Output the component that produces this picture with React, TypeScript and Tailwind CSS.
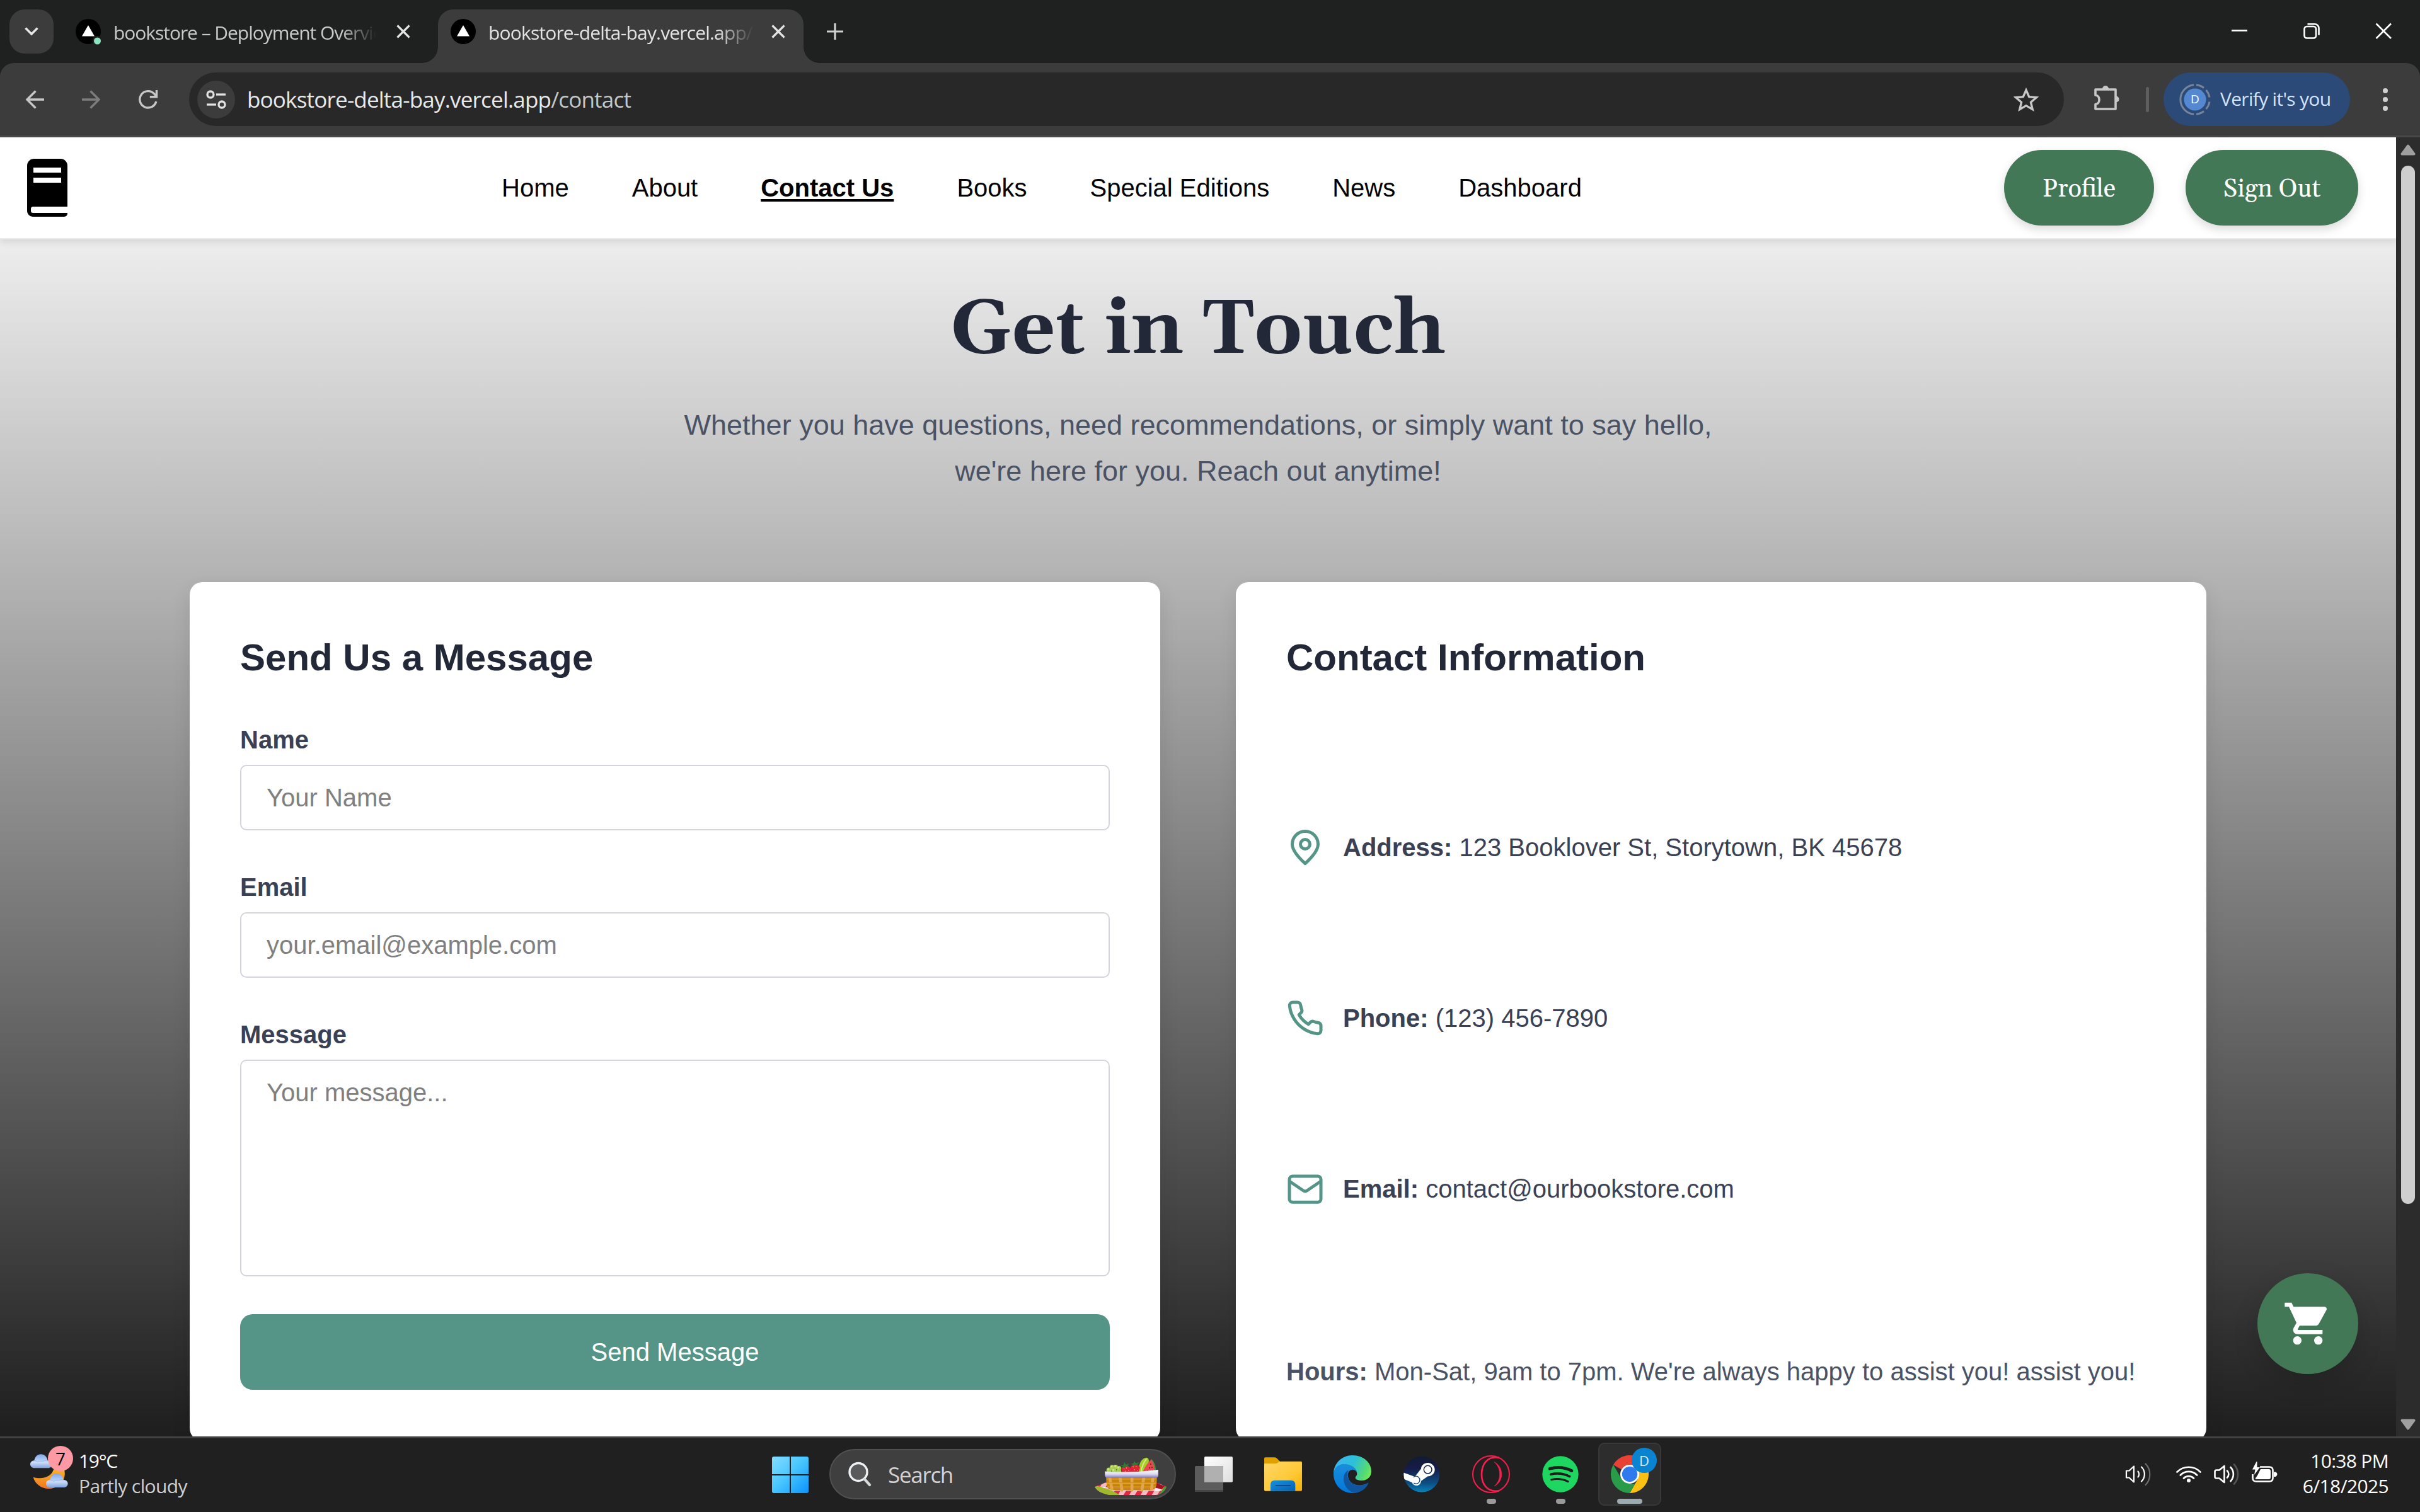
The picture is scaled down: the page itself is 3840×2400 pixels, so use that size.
import React from "react";
import { MdShoppingCart } from "react-icons/md";

const UI = "font-['Segoe_UI','Open_Sans','Noto_Sans',sans-serif]";
const SERIF = "font-[Georgia,Gelasio,'Liberation_Serif',serif]";

/* ---------- browser chrome ---------- */

function VercelFavicon({ dot = false }: { dot?: boolean }) {
  return (
    <svg viewBox="0 0 44 44" className="h-[44px] w-[44px] shrink-0">
      <circle cx="20" cy="22" r="20" fill="#000" />
      <path d="M20 12 30 29.500H10Z" fill="#fff" />
      {dot && <circle cx="34.500" cy="37" r="8" fill="#1f2120" />}
      {dot && <circle cx="34.500" cy="37" r="5.500" fill="#8ce3c0" />}
    </svg>
  );
}

function CloseIcon() {
  return (
    <svg viewBox="0 0 22 22" className="h-[22px] w-[22px] shrink-0" stroke="#e3e3e3" strokeWidth="3.200" fill="none">
      <path d="M1.500 1.500 20.500 20.500M20.500 1.500 1.500 20.500" />
    </svg>
  );
}

function TabStrip() {
  return (
    <div className="flex h-[100px] bg-[#1f2120] pt-[15px]">
      <div className="ml-[15px] flex h-[70px] w-[70px] items-center justify-center rounded-[24px] bg-[#3c3c3c]">
        <svg viewBox="0 0 22 14" className="h-[14px] w-[22px]" fill="none" stroke="#e8e8e8" strokeWidth="3.400">
          <path d="M1.500 1.500 11 11 20.500 1.500" />
        </svg>
      </div>

      <div className="ml-[35px] flex h-[70px] w-[575px] items-center">
        <VercelFavicon dot />
        <span className="mt-[3px] ml-[16px] w-[421px] overflow-hidden text-[30px] leading-[44px] tracking-[-1.050px] whitespace-nowrap text-[#c9c9c9] [mask-image:linear-gradient(to_right,black_86%,transparent_99%)]">
          bookstore – Deployment Overview
        </span>
        <span className="ml-[28px] flex">
          <CloseIcon />
        </span>
      </div>

      <div className="relative flex h-[85px] w-[580px] rounded-t-[24px] bg-[#3c3c3c] pb-[15px] pl-[20px]">
        <span className="absolute bottom-0 -left-[25px] h-[25px] w-[25px] bg-[radial-gradient(circle_at_0_0,transparent_24.500px,#3c3c3c_25px)]" />
        <span className="absolute -right-[25px] bottom-0 h-[25px] w-[25px] bg-[radial-gradient(circle_at_100%_0,transparent_24.500px,#3c3c3c_25px)]" />
        <div className="flex h-[70px] items-center">
          <VercelFavicon />
          <span className="mt-[3px] ml-[16px] w-[421px] overflow-hidden text-[30px] leading-[44px] tracking-[-0.830px] whitespace-nowrap text-[#e3e3e3] [mask-image:linear-gradient(to_right,black_86%,transparent_100%)]">
            bookstore-delta-bay.vercel.app/contact
          </span>
          <span className="ml-[28px] flex">
            <CloseIcon />
          </span>
        </div>
      </div>

      <div className="ml-[37px] flex h-[70px] items-center">
        <svg viewBox="0 0 26 26" className="h-[26px] w-[26px]" stroke="#d0d0d0" strokeWidth="3.200">
          <path d="M13 0V26M0 13H26" />
        </svg>
      </div>

      <svg viewBox="0 0 256 28" className="mt-[20px] mr-[44px] ml-auto h-[28px] w-[256px]" fill="none" stroke="#fff" strokeWidth="2.600">
        <path d="M1 13.500H26" />
        <rect x="116.500" y="7" width="18.500" height="18.500" rx="4" />
        <path d="M121.500 3.200h11.500a6.500 6.500 0 0 1 6.500 6.500v11" />
        <path d="M230.500 2.500 254 26M254 2.500 230.500 26" />
      </svg>
    </div>
  );
}

function Toolbar() {
  return (
    <div className="bg-[#1f2120]">
      <div className="flex h-[118px] items-center rounded-t-[22px] border-b-[3px] border-[#484848] bg-[#3c3c3c]">
        <svg viewBox="0 0 30 30" className="ml-[40px] h-[30px] w-[30px]" fill="none" stroke="#c7c7c7" strokeWidth="3.400">
          <path d="M30 15H3M16.500 1.500 3 15 16.500 28.500" />
        </svg>
        <svg viewBox="0 0 30 30" className="ml-[60px] h-[30px] w-[30px]" fill="none" stroke="#7d7d7d" strokeWidth="3.400">
          <path d="M0 15H27M13.500 1.500 27 15 13.500 28.500" />
        </svg>
        <svg viewBox="0 0 32 32" className="ml-[59px] h-[32px] w-[32px]" fill="none" stroke="#c7c7c7" strokeWidth="3.400">
          <path d="M28.800 19A13.200 13.200 0 1 1 26 7.200L29 10.500" />
          <path d="M29.500 1V11.800H18.800" />
        </svg>

        <div className="ml-[49px] flex h-[85px] w-[2975px] items-center rounded-full bg-[#282828] pl-[13px]">
          <div className="flex h-[60px] w-[60px] items-center justify-center rounded-full bg-[#3c3c3c]">
            <svg viewBox="0 0 32 30" className="h-[30px] w-[32px]" fill="none" stroke="#e3e3e3" strokeWidth="3.300">
              <circle cx="7" cy="7" r="5" />
              <path d="M16 7H31" />
              <circle cx="25" cy="23" r="5" />
              <path d="M1 23H16" />
            </svg>
          </div>
          <span className="ml-[19px] text-[35px] leading-[48px] tracking-[-0.800px] text-[#e8e8e8]">
            bookstore-delta-bay.vercel.app<span className="text-[#c4c7c5]">/contact</span>
          </span>
          <svg viewBox="0 0 40 38" className="mr-[40px] ml-auto h-[38px] w-[40px]" fill="none" stroke="#c7c7c7" strokeWidth="3.400">
            <path d="M20 4 24.700 14.600 36.300 15.700 27.500 23.300 30.200 34.600 20 28.600 9.800 34.600 12.500 23.300 3.700 15.700 15.300 14.600Z" />
          </svg>
        </div>

        <svg viewBox="0 0 42 42" className="mb-[5px] ml-[47px] h-[42px] w-[42px]" fill="none" stroke="#c7c7c7" strokeWidth="3.600" strokeLinejoin="round">
          <path d="M3 8H35V39H3V31.500C11 31 11 17.500 3 17Z" />
          <path d="M14 7a5 5 0 0 1 10 0ZM35.500 18.500a5 5 0 0 1 0 10Z" fill="#c7c7c7" stroke="none" />
        </svg>
        <div className="ml-[41px] h-[40px] w-[5px] rounded-full bg-[#5e5e5e]" />

        <div className="ml-[23px] flex h-[85px] w-[296px] items-center rounded-full bg-[#2b4a77] pl-[25px]">
          <span className="relative flex h-[50px] w-[50px] items-center justify-center">
            <svg viewBox="0 0 50 50" className="absolute inset-0 h-[50px] w-[50px]" fill="none">
              <circle cx="25" cy="25" r="17.500" fill="#5489d2" />
              <path d="M23 1.800A23.300 23.300 0 0 0 23 48.200" stroke="#77859a" strokeWidth="3" />
              <path d="M27 1.800A23.300 23.300 0 0 1 39 6.500M42.500 10A23.300 23.300 0 0 1 48 21.500M48 28.500A23.300 23.300 0 0 1 42.500 40M39 43.500A23.300 23.300 0 0 1 27 48.200" stroke="#77859a" strokeWidth="3" />
            </svg>
            <span className="relative text-[19px] leading-none text-white">D</span>
          </span>
          <span className="mb-[1px] ml-[15px] text-[30px] leading-[44px] tracking-[-0.700px] whitespace-nowrap text-[#d3e3fd]">Verify it's you</span>
        </div>

        <svg viewBox="0 0 8 38" className="ml-[52px] h-[38px] w-[8px]" fill="#d0d0d0">
          <circle cx="4" cy="5" r="4" />
          <circle cx="4" cy="19" r="4" />
          <circle cx="4" cy="33" r="4" />
        </svg>
      </div>
    </div>
  );
}

/* ---------- web page ---------- */

const links = ["Home", "About", "Contact Us", "Books", "Special Editions", "News", "Dashboard"];

function SiteNav() {
  return (
    <header className="relative flex h-[162px] shrink-0 items-center border-b-2 border-[#ebebeb] bg-white shadow-[0_3px_12px_rgba(0,0,0,0.13)]">
      <svg viewBox="0 0 64 92" className="ml-[43px] h-[92px] w-[64px]">
        <path d="M11 0H53A11 11 0 0 1 64 11V76H9.500Q6 76 6 79.500V82.500Q6 86 9.500 86H64V87A5 5 0 0 1 59 92H9A9 9 0 0 1 0 83V11A11 11 0 0 1 11 0Z" />
        <path d="M10 14H54V22H10ZM10 30H54V38H10Z" fill="#fff" />
      </svg>
      <nav className="ml-[689px] flex gap-[100px] text-[40px] leading-[60px] whitespace-nowrap text-black">
        {links.map((l) =>
          l === "Contact Us" ? (
            <a key={l} className="font-bold underline decoration-[4px] underline-offset-[4px]">{l}</a>
          ) : (
            <a key={l}>{l}</a>
          ),
        )}
      </nav>
      <div className={`mr-[60px] ml-auto flex gap-[50px] text-[40px] leading-[60px] text-white ${SERIF}`}>
        <button className="h-[120px] w-[238px] rounded-full bg-[#427855] pt-[5px] shadow-[0_6px_15px_rgba(0,0,0,0.15)]">Profile</button>
        <button className="h-[120px] w-[274px] rounded-full bg-[#427855] pt-[5px] shadow-[0_6px_15px_rgba(0,0,0,0.15)]">Sign Out</button>
      </div>
    </header>
  );
}

function Field({ label, placeholder, tall = false }: { label: string; placeholder: string; tall?: boolean }) {
  return (
    <label className="mb-[60px] block">
      <span className="mb-[10px] block text-[40px] leading-[60px] font-bold text-[#3a4155]">{label}</span>
      {tall ? (
        <textarea
          placeholder={placeholder}
          className="block h-[344px] w-full resize-none rounded-[10px] border-[2px] border-[#d3d5dd] bg-white px-[40px] py-[20px] text-[40px] leading-[60px] placeholder:text-[#808080]"
        />
      ) : (
        <input
          placeholder={placeholder}
          className="block h-[104px] w-full rounded-[10px] border-[2px] border-[#d3d5dd] bg-white px-[40px] text-[40px] leading-[60px] placeholder:text-[#808080]"
        />
      )}
    </label>
  );
}

function FeatherIcon({ children }: { children: React.ReactNode }) {
  return (
    <svg viewBox="0 0 24 24" className="h-[60px] w-[60px] shrink-0" fill="none" stroke="#559588" strokeWidth="2" strokeLinecap="round" strokeLinejoin="round">
      {children}
    </svg>
  );
}

const contacts = [
  {
    label: "Address:",
    value: "123 Booklover St, Storytown, BK 45678",
    icon: (
      <>
        <path d="M12 22.300C9.500 20 3.800 14.500 3.800 10a8.200 8.200 0 0 1 16.400 0C20.200 14.500 14.500 20 12 22.300Z" />
        <circle cx="12" cy="10" r="3" />
      </>
    ),
  },
  {
    label: "Phone:",
    value: "(123) 456-7890",
    icon: (
      <path d="M22 16.920v3a2 2 0 0 1-2.180 2 19.790 19.790 0 0 1-8.630-3.070 19.500 19.500 0 0 1-6-6 19.790 19.790 0 0 1-3.070-8.670A2 2 0 0 1 4.110 2h3a2 2 0 0 1 2 1.720 12.840 12.840 0 0 0 .7 2.810 2 2 0 0 1-.45 2.110L8.090 9.910a16 16 0 0 0 6 6l1.270-1.270a2 2 0 0 1 2.110-.45 12.840 12.840 0 0 0 2.810.7A2 2 0 0 1 22 16.920z" />
    ),
  },
  {
    label: "Email:",
    value: "contact@ourbookstore.com",
    icon: (
      <>
        <rect x="2" y="4" width="20" height="16.500" rx="2" />
        <path d="M2.200 7.300 10.900 13.200a2 2 0 0 0 2.200 0L21.800 7.300" />
      </>
    ),
  },
];

function ContactPage() {
  return (
    <div className="relative flex h-[2062px] w-[3802px] flex-col overflow-hidden bg-[linear-gradient(to_bottom,#ffffff_0px,#000000_2338px)] font-['Liberation_Sans',Arial,sans-serif]">
      <SiteNav />
      <main className="flex shrink-0 flex-col items-center">
        <h1 className={`mt-[70px] text-[120px] leading-[150px] font-bold text-[#232838] ${SERIF}`}>Get in Touch</h1>
        <p className="mt-[38px] text-center text-[45px] leading-[73px] text-[#4a5365]">
          Whether you have questions, need recommendations, or simply want to say hello,
          <br />
          we're here for you. Reach out anytime!
        </p>

        <div className="mt-[140px] flex gap-[120px]">
          <section className="h-[1363px] w-[1540px] rounded-[20px] bg-white p-[80px] shadow-[0_10px_30px_rgba(0,0,0,0.1)]">
            <h2 className="mb-[60px] text-[60px] leading-[80px] font-bold text-[#232838]">Send Us a Message</h2>
            <Field label="Name" placeholder="Your Name" />
            <Field label="Email" placeholder="your.email@example.com" />
            <Field label="Message" placeholder="Your message..." tall />
            <button className="block h-[120px] w-full rounded-[20px] bg-[#559588] text-[40px] leading-[60px] text-white">Send Message</button>
          </section>

          <section className="flex h-[1363px] w-[1540px] flex-col rounded-[20px] bg-white p-[80px] shadow-[0_10px_30px_rgba(0,0,0,0.1)]">
            <h2 className="text-[60px] leading-[80px] font-bold text-[#232838]">Contact Information</h2>
            <ul className="mt-[231px] flex flex-col gap-[211px]">
              {contacts.map((c) => (
                <li key={c.label} className="flex h-[60px] items-center text-[40px] leading-[60px] whitespace-nowrap text-[#3a4155]">
                  <FeatherIcon>{c.icon}</FeatherIcon>
                  <span className="ml-[30px]">
                    <strong>{c.label}</strong> {c.value}
                  </span>
                </li>
              ))}
            </ul>
            <p className="mt-auto text-[40px] leading-[60px] whitespace-nowrap text-[#4a5365]">
              <strong>Hours:</strong> Mon-Sat, 9am to 7pm. We're always happy to assist you! assist you!
            </p>
          </section>
        </div>
      </main>

      <button className="absolute right-[60px] bottom-[99px] flex h-[160px] w-[160px] items-center justify-center rounded-full bg-[#427855] text-white shadow-[0_15px_40px_rgba(0,0,0,0.15)]">
        <MdShoppingCart className="h-[80px] w-[80px]" />
      </button>
    </div>
  );
}

function Scrollbar() {
  return (
    <div className="flex w-[38px] flex-col items-center bg-[#2c2c2c]">
      <svg viewBox="0 0 24 18" className="mt-[11px] h-[18px] w-[24px]">
        <path d="M12 2.500 21.500 15.500H2.500Z" fill="#9f9f9f" stroke="#9f9f9f" strokeWidth="4" strokeLinejoin="round" />
      </svg>
      <div className="mt-[16px] h-[1648px] w-[22px] rounded-full bg-[#cfcfcf]" />
      <svg viewBox="0 0 24 18" className="mt-auto mb-[10px] h-[18px] w-[24px]">
        <path d="M12 15.500 21.500 2.500H2.500Z" fill="#9f9f9f" stroke="#9f9f9f" strokeWidth="4" strokeLinejoin="round" />
      </svg>
    </div>
  );
}

/* ---------- taskbar ---------- */

function Cloud({ transform }: { transform: string }) {
  return (
    <g transform={transform}>
      <path d="M20 68C8 68 0 60 0 50S8 32 19 32C22 14 34 2 51 2S80 14 83 32C96 32 104 40 104 50S96 68 84 68Z" fill="url(#cloudFill)" />
      <path d="M19 32C28 32 33 35 36 40C42 34 52 32 60 36C66 30 76 29 83 32" fill="none" stroke="#84a9e8" strokeWidth="3" opacity=".55" />
    </g>
  );
}

function Weather() {
  return (
    <div className="flex h-full w-[1204px] items-center pl-[48px]">
      <span className="relative mb-[22px] h-[68px] w-[68px] shrink-0">
        <svg viewBox="144 105 204 204" className="h-[68px] w-[68px]">
          <defs>
            <linearGradient id="cloudFill" x1="0" y1="0" x2="0" y2="1">
              <stop offset="0" stopColor="#7ea8ec" />
              <stop offset=".6" stopColor="#c9dbf7" />
              <stop offset="1" stopColor="#7fa2e0" />
            </linearGradient>
            <linearGradient id="moonFill" x1="0" y1="0" x2="0" y2="1">
              <stop offset="0" stopColor="#f7c52f" />
              <stop offset="1" stopColor="#f2761e" />
            </linearGradient>
          </defs>
          <path d="M158 254C180 260 206 262 228 250C250 238 262 215 255 190L300 200C316 235 308 270 285 290C240 325 175 310 158 254Z" fill="url(#moonFill)" />
          <Cloud transform="translate(144 143)" />
          <Cloud transform="translate(219 235)" />
        </svg>
        <span className="absolute top-0 right-0 flex h-[40px] w-[40px] items-center justify-center rounded-full bg-[#ff99a4] text-[28px] leading-none text-black">7</span>
      </span>
      <span className="mb-[2px] ml-[9px] flex flex-col text-[30px] leading-[40px] whitespace-nowrap">
        <span className="tracking-[-1.300px] text-white">19°C</span>
        <span className="tracking-[-0.600px] text-[#cfcfcf]">Partly cloudy</span>
      </span>
    </div>
  );
}

function Tile({ children, dot = false }: { children: React.ReactNode; dot?: boolean }) {
  return (
    <div className="relative flex h-[100px] w-[100px] shrink-0 items-center justify-center">
      {children}
      {dot && <span className="absolute bottom-[3px] left-[43px] h-[8px] w-[15px] rounded-full bg-[#9a9a9a]" />}
    </div>
  );
}

function StartIcon() {
  return (
    <svg viewBox="0 0 58 58" className="mt-[2px] h-[58px] w-[58px]">
      <defs>
        <linearGradient id="startFill" gradientUnits="userSpaceOnUse" x1="0" y1="0" x2="58" y2="58">
          <stop offset="0" stopColor="#87dcff" />
          <stop offset=".45" stopColor="#4cc8ff" />
          <stop offset="1" stopColor="#0a93fb" />
        </linearGradient>
      </defs>
      <path d="M3 0H28V28H0V3A3 3 0 0 1 3 0ZM30 0H55A3 3 0 0 1 58 3V28H30ZM0 30H28V58H3A3 3 0 0 1 0 55ZM30 30H58V55A3 3 0 0 1 55 58H30Z" fill="url(#startFill)" />
    </svg>
  );
}

function PicnicBasket() {
  return (
    <svg viewBox="50 68 343 181" className="h-[60px] w-[114px]">
      <defs>
        <pattern id="gingham" width="54" height="40" patternUnits="userSpaceOnUse" patternTransform="translate(60 190) skewX(-30)">
          <rect width="54" height="40" fill="#f9b9c3" />
          <rect width="27" height="20" fill="#e5263f" />
          <rect x="27" y="20" width="27" height="20" fill="#fff1f2" />
        </pattern>
        <linearGradient id="rimFill" x1="0" y1="0" x2="0" y2="1">
          <stop offset="0" stopColor="#ffffff" />
          <stop offset=".55" stopColor="#dcd8ec" />
          <stop offset="1" stopColor="#7a74c4" />
        </linearGradient>
        <linearGradient id="basketFill" x1="0" y1="0" x2="0" y2="1">
          <stop offset="0" stopColor="#c9840f" />
          <stop offset=".5" stopColor="#e3a026" />
          <stop offset="1" stopColor="#c17d1e" />
        </linearGradient>
      </defs>
      <path d="M50 210 100 190H345L393 208C385 232 365 248 340 249H130C90 246 62 232 50 210Z" fill="url(#gingham)" />
      <path d="M50 210 64 205C90 215 140 225 168 249H125C90 246 62 232 50 210Z" fill="#9fb92e" />
      <path d="M393 210C385 232 370 244 350 248C365 238 376 222 383 206Z" fill="#4f9a2f" />
      <path d="M345 192 384 206 372 222 330 212Z" fill="#a3101f" />
      <path d="M104 160H348L345 200Q342 226 316 226H138Q110 226 107 200Z" fill="url(#basketFill)" />
      <path d="M106 182H346M108 202H345" stroke="#c58208" strokeWidth="9" />
      <path d="M122 168 132 220M172 168 180 226M228 168V226M284 168 276 226M328 168 322 220" stroke="#e0a748" strokeWidth="14" strokeLinecap="round" />
      <path d="M108 190H345" stroke="#a86a10" strokeWidth="2" opacity=".6" />
      <path d="M262 140C258 110 268 80 290 72C302 66 312 76 308 92L300 140Z" fill="#a6cf2c" />
      <path d="M272 138C275 112 284 92 298 76" stroke="#dcef8a" strokeWidth="5" fill="none" />
      <path d="M280 138C290 115 305 92 322 78C335 92 342 115 341 140Z" fill="#e84a4f" />
      <path d="M322 78C338 94 345 118 342 140H335C338 118 332 96 320 80Z" fill="#3d9140" />
      <path d="M318 98V104M312 116V122M324 114V120M304 130V136M326 130V136" stroke="#3a1014" strokeWidth="4" />
      <g fill="#a9cf52">
        <circle cx="118" cy="130" r="12" />
        <circle cx="134" cy="117" r="12" />
        <circle cx="150" cy="115" r="11" />
        <circle cx="166" cy="121" r="11" />
        <circle cx="142" cy="133" r="12" />
        <circle cx="165" cy="136" r="12" />
      </g>
      <g fill="#d3e88a">
        <circle cx="115" cy="126" r="4.500" />
        <circle cx="131" cy="113" r="4.500" />
        <circle cx="148" cy="111" r="4.500" />
        <circle cx="163" cy="118" r="4.500" />
        <circle cx="139" cy="130" r="4.500" />
      </g>
      <path d="M176 120C190 108 215 108 226 124L222 142H182ZM222 112C238 100 258 102 267 116L260 142H224Z" fill="#e5203a" />
      <path d="M190 122v4M202 118v4M212 128v4M196 133v4M234 112v4M248 112v4M240 126v4M254 128v4" stroke="#ffd54a" strokeWidth="4" />
      <path d="M172 108 188 106 192 92 200 104 214 96 208 108 216 114 198 114 184 122 186 112ZM222 100 234 98 240 86 246 97 264 92 254 102 258 108 242 106 230 112 232 104Z" fill="#2f7d32" />
      <path d="M98 136Q226 144 354 128V158Q352 167 342 167H112Q101 167 99 158Z" fill="url(#rimFill)" />
    </svg>
  );
}

function TaskViewIcon() {
  return (
    <svg viewBox="528 66 180 168" className="h-[56px] w-[60px]">
      <defs>
        <linearGradient id="tvFront" x1="0" y1="0" x2="1" y2="1">
          <stop offset="0" stopColor="#ffffff" />
          <stop offset="1" stopColor="#dedede" />
        </linearGradient>
      </defs>
      <rect x="573" y="66" width="135" height="122" rx="5" fill="url(#tvFront)" />
      <rect x="528" y="111" width="135" height="123" rx="5" fill="#5c5c5c" />
      <path d="M573 111H658Q663 111 663 116V188H573Z" fill="#b0b0b0" />
      <path d="M528 225H663V229Q663 234 658 234H533Q528 234 528 229Z" fill="#454545" />
    </svg>
  );
}

function FolderIcon() {
  return (
    <svg viewBox="858 62 180 180" className="h-[60px] w-[60px]">
      <defs>
        <linearGradient id="folderFill" x1="0" y1="0" x2="1" y2="1">
          <stop offset="0" stopColor="#ffd768" />
          <stop offset=".6" stopColor="#ffc937" />
          <stop offset="1" stopColor="#f5b000" />
        </linearGradient>
        <linearGradient id="folderTab" x1="0" y1="0" x2="1" y2="1">
          <stop offset="0" stopColor="#1592dd" />
          <stop offset="1" stopColor="#0560b5" />
        </linearGradient>
      </defs>
      <path d="M863 72H908Q914 72 919 77L934 92V110H858V77Q858 72 863 72Z" fill="#e0a100" />
      <path d="M858 106Q858 101 863 101H912Q918 101 922 98L929 93Q932 91 937 91H1033Q1038 91 1038 96V227Q1038 232 1033 232H863Q858 232 858 227Z" fill="url(#folderFill)" />
      <path d="M888 232V202Q888 181 909 181H985Q1006 181 1006 202V232Z" fill="url(#folderTab)" />
      <path d="M912 206H984" stroke="#0b3f83" strokeWidth="5" />
    </svg>
  );
}

function EdgeIcon() {
  return (
    <svg viewBox="1188 60 180 180" className="h-[60px] w-[60px]">
      <defs>
        <linearGradient id="edgeTop" x1="0" y1=".3" x2="1" y2=".6">
          <stop offset="0" stopColor="#3ab4f6" />
          <stop offset=".5" stopColor="#2dc1d6" />
          <stop offset=".85" stopColor="#53d977" />
          <stop offset="1" stopColor="#6ce85a" />
        </linearGradient>
        <linearGradient id="edgeMid" x1="0" y1="0" x2="0" y2="1">
          <stop offset="0" stopColor="#1a8fdc" />
          <stop offset="1" stopColor="#0078d8" />
        </linearGradient>
      </defs>
      <path d="M1188 150C1188 98 1228 60 1278 60C1332 60 1368 96 1368 136C1368 162 1350 180 1324 180C1304 180 1292 174 1292 167C1292 162 1300 158 1300 148C1300 118 1260 100 1228 104C1206 108 1190 126 1188 150Z" fill="url(#edgeTop)" />
      <path d="M1188 148C1190 120 1212 100 1244 102C1276 104 1300 124 1300 146C1298 134 1288 128 1276 128C1264 130 1256 142 1256 154C1258 190 1290 210 1330 200L1353 192C1340 220 1312 240 1278 240C1226 240 1188 200 1188 148Z" fill="url(#edgeMid)" />
      <path d="M1256 132C1240 142 1232 164 1238 188C1246 218 1268 236 1292 239C1322 234 1344 216 1354 194C1354 191 1352 191 1349 193C1300 222 1254 190 1254 152C1254 144 1256 138 1258 134Z" fill="#0f55a0" />
    </svg>
  );
}

function SteamIcon() {
  return (
    <svg viewBox="77 90 180 180" className="h-[60px] w-[60px]">
      <defs>
        <linearGradient id="steamFill" x1="0" y1="0" x2="0" y2="1">
          <stop offset="0" stopColor="#111b33" />
          <stop offset=".35" stopColor="#171c48" />
          <stop offset=".75" stopColor="#0b4f83" />
          <stop offset="1" stopColor="#0784bd" />
        </linearGradient>
        <clipPath id="steamClip">
          <circle cx="167" cy="180" r="86" />
        </clipPath>
      </defs>
      <g clipPath="url(#steamClip)">
        <circle cx="167" cy="180" r="86" fill="url(#steamFill)" />
        <path d="M78 172 134 192 164 154C164 138 178 126 196 126C214 126 229 141 229 158C229 176 214 190 196 190L164 212C162 226 154 234 142 234C132 234 124 228 120 219L78 202Z" fill="#fff" />
        <circle cx="196" cy="158" r="19" fill="none" stroke="#161d47" strokeWidth="4.500" />
        <path d="M128 194A18 18 0 1 1 129 222" fill="none" stroke="#10426f" strokeWidth="4" />
      </g>
    </svg>
  );
}

function OperaIcon() {
  return (
    <svg viewBox="408 90 180 180" className="h-[60px] w-[60px]" fill="none" stroke="#fa1e4e">
      <circle cx="498" cy="180" r="87" strokeWidth="6" />
      <path d="M536 101C478 92 453 135 453 180S478 268 536 259" strokeWidth="8" />
      <path d="M513 122C560 145 560 215 513 237C548 210 548 150 513 122Z" fill="#fa1e4e" strokeWidth="2" />
    </svg>
  );
}

function SpotifyIcon() {
  return (
    <svg viewBox="737 90 180 180" className="h-[60px] w-[60px]">
      <circle cx="827" cy="180" r="86" fill="#1ed760" />
      <g fill="none" stroke="#1d1d1d" strokeLinecap="round">
        <path d="M776 154C812 144 850 148 881 164" strokeWidth="14" />
        <path d="M781 181C812 173 843 177 871 191" strokeWidth="11" />
        <path d="M784 206C810 200 838 203 863 215" strokeWidth="9" />
      </g>
    </svg>
  );
}

function ChromeIcon() {
  return (
    <svg viewBox="0 0 180 180" className="h-[60px] w-[60px]">
      <path d="M90 90 12 45A90 90 0 0 1 168 45H90Z" fill="#e94235" />
      <path d="M90 45H168A90 90 0 0 1 90 180L129 112.500Z" fill="#fcc013" />
      <path d="M12 45 51 112.500 90 135H116L90 180A90 90 0 0 1 12 45Z" fill="#2a9b49" />
      <circle cx="90" cy="90" r="45" fill="#fff" />
      <circle cx="90" cy="90" r="36.500" fill="#2f7bee" />
    </svg>
  );
}

function Tray() {
  return (
    <div className="mr-[49px] ml-auto flex items-center">
      <svg viewBox="0 0 42 40" className="h-[40px] w-[42px]" fill="none" stroke="#fff" strokeWidth="2.200" strokeLinejoin="round">
        <path d="M2 14.500H6.500L14 7.500V32.500L6.500 25.500H2Z" />
        <path d="M20.500 15.500A7 7 0 0 1 20.500 24.500M26 8.500A16 16 0 0 1 26 31.500" strokeLinecap="round" />
        <path d="M32.500 3.500A24 24 0 0 1 32.500 37" stroke="#6d6d6d" strokeLinecap="round" />
      </svg>
      <svg viewBox="0 0 40 40" className="ml-[39px] h-[40px] w-[40px]" fill="none" stroke="#fff" strokeWidth="2.700" strokeLinecap="round">
        <path d="M1.500 16.500A26 26 0 0 1 38.500 16.500M6.800 21.500A18.500 18.500 0 0 1 33.200 21.500M12 26.500A11.200 11.200 0 0 1 28 26.500" />
        <circle cx="20" cy="30" r="3" fill="#fff" stroke="none" />
      </svg>
      <svg viewBox="0 0 42 40" className="ml-[20px] h-[40px] w-[42px]" fill="none" stroke="#fff" strokeWidth="2.600" strokeLinejoin="round">
        <path d="M4 13.500H8.500L16.500 7V33L8.500 26.500H4Q1.500 26.500 1.500 24V16Q1.500 13.500 4 13.500Z" />
        <path d="M21 14.500A7.500 7.500 0 0 1 21 25.500M26.500 9A16 16 0 0 1 26.500 31" strokeLinecap="round" />
        <path d="M32 4.500A23 23 0 0 1 32 35.500" stroke="#555" strokeLinecap="round" />
      </svg>
      <svg viewBox="0 0 42 40" className="ml-[18px] h-[40px] w-[42px]">
        <path d="M13 8.500H28Q33.500 8.500 33.500 14V26Q33.500 31.500 28 31.500H7Q1.500 31.500 1.500 26V20" fill="none" stroke="#fff" strokeWidth="2.600" />
        <path d="M35 16.500H38Q40.500 17.500 40.500 20T38 24H35Z" fill="#fff" />
        <path d="M14 12H27Q30 12 30 15V25Q30 28 27 28H8Q6 28 5.500 27L9 22Z" fill="#fff" />
        <path d="M7.500 0 1 12.500H5.500L4 21 13 9H8.500L8.500 0Z" fill="#fff" />
      </svg>
      <div className="mr-[1px] mb-[2px] ml-[38px] flex w-[137px] flex-col items-end text-[30px] leading-[40px] whitespace-nowrap text-white">
        <span className="tracking-[-0.700px]">10:38 PM</span>
        <span className="tracking-[-0.650px]">6/18/2025</span>
      </div>
    </div>
  );
}

function Taskbar() {
  return (
    <footer className="flex h-[120px] items-center bg-[#202020] shadow-[inset_0_3px_0_#434343]">
      <Weather />
      <Tile>
        <StartIcon />
      </Tile>
      <div className="ml-[12px] flex h-[80px] w-[550px] items-center rounded-full border-[2px] border-[#505050] bg-[#3f3f3f] pr-[13px] pl-[28px]">
        <svg viewBox="0 0 37 40" className="h-[40px] w-[37px]" fill="none" stroke="#eef1f3" strokeLinecap="round">
          <circle cx="16" cy="16.500" r="14" strokeWidth="3.400" fill="#5a5a5a" />
          <path d="M26 28 34 37" strokeWidth="4.200" stroke="#d5dadd" />
        </svg>
        <span className="mt-[1px] ml-[26px] text-[35px] leading-[48px] tracking-[-1.300px] text-[#d2d2d2]">Search</span>
        <span className="mt-[6px] ml-auto flex">
          <PicnicBasket />
        </span>
      </div>
      <div className="ml-[10px] flex gap-[10px]">
        <Tile>
          <TaskViewIcon />
        </Tile>
        <Tile>
          <FolderIcon />
        </Tile>
        <Tile>
          <EdgeIcon />
        </Tile>
        <Tile>
          <SteamIcon />
        </Tile>
        <Tile dot>
          <OperaIcon />
        </Tile>
        <Tile dot>
          <SpotifyIcon />
        </Tile>
        <div className="relative flex h-[100px] w-[100px] items-center justify-center rounded-[10px] border-[2px] border-[#383838] bg-[#2d2d2d]">
          <ChromeIcon />
          <span className="absolute top-[6px] right-[5px] flex h-[40px] w-[40px] items-center justify-center rounded-full bg-[#0a84d0] text-[22px] leading-none text-[#d5ecfa]">D</span>
          <span className="absolute bottom-[1px] left-[28px] h-[8px] w-[40px] rounded-full bg-[#9cabb0]" />
        </div>
      </div>
      <Tray />
    </footer>
  );
}

export default function App() {
  return (
    <div className={`flex h-[2400px] w-[3840px] flex-col overflow-hidden bg-[#202020] ${UI}`}>
      <TabStrip />
      <Toolbar />
      <div className="flex h-[2062px]">
        <ContactPage />
        <Scrollbar />
      </div>
      <Taskbar />
    </div>
  );
}
